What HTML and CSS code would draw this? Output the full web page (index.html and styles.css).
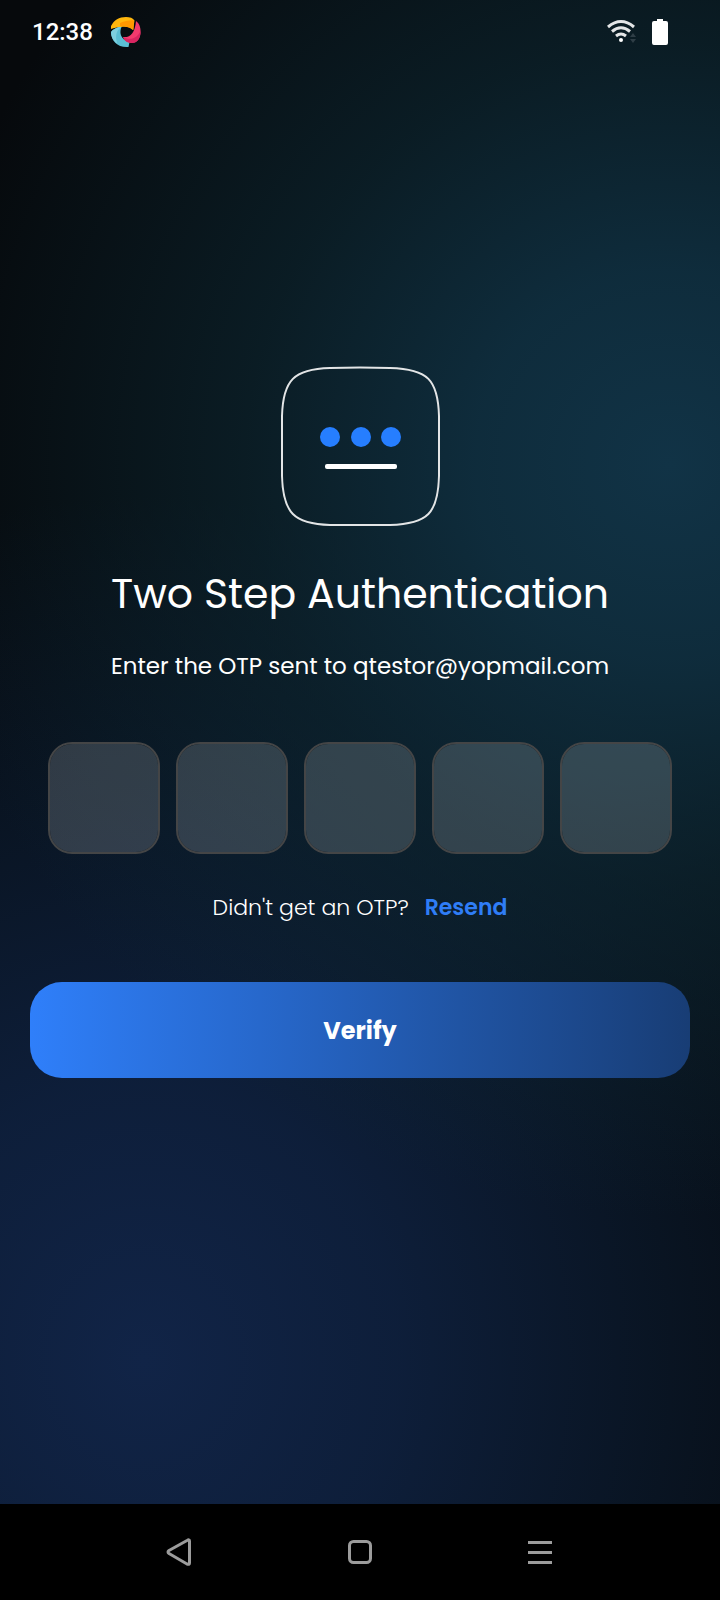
FILE: index.html
```html
<!DOCTYPE html>
<html lang="en">
<head>
<meta charset="utf-8">
<meta name="viewport" content="width=device-width, initial-scale=1">
<title>Two Step Authentication</title>
<link rel="stylesheet" href="styles.css">
</head>
<body>
<div class="screen">
  <header class="status">
    <div class="status-group">
      <time class="clock">12:38</time>
      <svg class="app-icon" width="32" height="32" viewBox="0 0 32 32" aria-hidden="true">
        <path fill="#ffb70d" d="M2 10C5 4 10 1 17 1c4 0 7 1 8.500 3.500L24 14c-3-3-7-4-12-3-4 0-7 1-10 2z"/>
        <path fill="#ff9800" d="M11 7c5-2 10-3 14-2.500L24.500 14C21 11 16 10 11 10z"/>
        <path fill="#5bbfd4" d="M12.500 11c-2 5-1 9 2 12 2 2 4 3 6 3l-1 5C9 32 2 25 2 16c2-3 6-5 10.500-5z"/>
        <path fill="#7ed0df" d="M2 16c2-3 6-5 10.500-5-5 3-7 9-4 17-4-3-6.500-7-6.500-12z"/>
        <path fill="#f23a6d" d="M27 5c4 3 5 8 4.500 13-1 6-4.500 9-8.500 9-5 0-8-3-9-6 7 1 12-4 13-16z"/>
        <path fill="#d92561" d="M31.500 15c-3 7-9.500 10-17.500 6 1 3 4 6 9 6 5 0 8.500-4 8.500-12z"/>
      </svg>
    </div>
    <div class="status-group">
      <svg width="29" height="26" viewBox="0 0 29 26" aria-hidden="true">
        <g fill="none" stroke="#e4e6e7" stroke-width="3">
          <path d="M1 8Q14-3 27 8"/>
          <path d="M5 12.500Q14 5 23 12.500"/>
          <path d="M9 17Q14 13 19 17"/>
        </g>
        <circle cx="14" cy="21" r="2" fill="#fff"/>
        <path fill="#2f3e46" d="M23 18l3-4 3 4zM23 20h6l-3 4z"/>
      </svg>
      <svg width="16" height="26" viewBox="0 0 16 26" aria-hidden="true">
        <path fill="#fff" d="M5 0h6v2h3q2 0 2 2v20q0 2-2 2H2q-2 0-2-2V4q0-2 2-2h3z"/>
      </svg>
    </div>
  </header>

  <main class="content">
    <svg class="emblem" width="160" height="160" viewBox="0 0 160 160" aria-hidden="true">
      <path fill="none" stroke="#e3e5e6" stroke-width="2" d="M50 2Q80 1 110 2C148 3 158 14 159 50V110C158 147 148 158 110 159H50C14 158 3 147 2 110V50C3 14 14 3 50 2z"/>
      <g fill="#267eff"><circle cx="50" cy="71" r="10"/><circle cx="81" cy="71" r="10"/><circle cx="111" cy="71" r="10"/></g>
      <rect x="45" y="98" width="72" height="5" rx="2" fill="#fff"/>
    </svg>
    <h1 class="title">Two Step Authentication</h1>
    <p class="subtitle">Enter the OTP sent to qtestor@yopmail.com</p>
    <form class="form">
      <div class="otp">
        <input class="digit" type="text" inputmode="numeric" maxlength="1" aria-label="Digit 1">
        <input class="digit" type="text" inputmode="numeric" maxlength="1" aria-label="Digit 2">
        <input class="digit" type="text" inputmode="numeric" maxlength="1" aria-label="Digit 3">
        <input class="digit" type="text" inputmode="numeric" maxlength="1" aria-label="Digit 4">
        <input class="digit" type="text" inputmode="numeric" maxlength="1" aria-label="Digit 5">
      </div>
      <p class="resend">Didn't get an OTP? <a class="resend-link" href="#">Resend</a></p>
      <button class="verify" type="submit">Verify</button>
    </form>
  </main>

  <nav class="system-nav" aria-label="System">
    <button class="nav-button" type="button" aria-label="Back">
      <svg width="28" height="28" viewBox="0 0 28 28"><path fill="none" stroke="#9c9c9c" stroke-width="3" stroke-linejoin="round" d="M21 2.500Q23.500 1 23.500 3v22q0 2-2.500 1L3 15.500Q1 14 3 12.500z"/></svg>
    </button>
    <button class="nav-button" type="button" aria-label="Home">
      <svg width="24" height="24" viewBox="0 0 24 24"><rect x="1.500" y="1.500" width="21" height="21" rx="4" fill="none" stroke="#9c9c9c" stroke-width="3"/></svg>
    </button>
    <button class="nav-button" type="button" aria-label="Recent apps">
      <svg width="24" height="24" viewBox="0 0 24 24"><path fill="#9c9c9c" d="M0 1h24v3H0zM0 11h24v3H0zM0 21h24v3H0z"/></svg>
    </button>
  </nav>
</div>
</body>
</html>
```
FILE: styles.css
```css
* { box-sizing: border-box; }

body {
  margin: 0;
  background: #000;
  color: #fff;
  font-family: Poppins, "Noto Sans", sans-serif;
}

.screen {
  display: flex;
  flex-direction: column;
  min-height: 100vh;
  background:
    radial-gradient(ellipse 105% 47% at 93% 29%, #113346 0%, rgba(16, 50, 68, 0.85) 26%, rgba(14, 44, 56, 0.55) 56%, rgba(12, 36, 46, 0) 100%),
    radial-gradient(ellipse 110% 54% at 20% 85%, #112447 0%, rgba(15, 34, 66, 0.85) 32%, rgba(12, 30, 54, 0.55) 65%, rgba(8, 20, 36, 0) 100%),
    #06090c;
}

.status {
  display: flex;
  justify-content: space-between;
  align-items: center;
  height: 64px;
  padding: 0 52px 0 32px;
}

.status-group {
  display: flex;
  align-items: center;
  gap: 16px;
}

.clock {
  font: 500 24px/32px Roboto, sans-serif;
}

.content {
  flex: 1;
  display: flex;
  flex-direction: column;
  align-items: center;
  padding: 302px 30px 48px;
}

.title {
  margin: 38px 0 0;
  font-size: 41px;
  font-weight: 400;
  line-height: 60px;
  text-align: center;
}

.subtitle {
  margin: 26px 0 0;
  font-size: 23px;
  font-weight: 400;
  line-height: 32px;
  text-align: center;
}

.form {
  width: 100%;
  margin-top: 60px;
}

.otp {
  display: grid;
  grid-template-columns: repeat(5, 1fr);
  gap: 16px;
  padding: 0 18px;
}

.digit {
  width: 100%;
  min-width: 0;
  aspect-ratio: 1;
  border: 2px solid #444546;
  border-radius: 24px;
  background: rgba(255, 255, 255, 0.16);
  background-clip: padding-box;
  color: #fff;
  font: inherit;
  font-size: 41px;
  text-align: center;
}

.resend {
  display: flex;
  justify-content: center;
  gap: 16px;
  margin: 38px 0 0;
  font-size: 22px;
  font-weight: 300;
  line-height: 32px;
}

.resend-link {
  color: #2f7df6;
  font-weight: 600;
  text-decoration: none;
}

.verify {
  display: block;
  width: 100%;
  height: 96px;
  margin-top: 58px;
  border: 0;
  border-radius: 32px;
  background: linear-gradient(90deg, #2f7ffa, #183d75);
  color: #fff;
  font: inherit;
  font-size: 24px;
  font-weight: 700;
}

.system-nav {
  display: grid;
  grid-template-columns: repeat(3, 1fr);
  height: 96px;
  padding: 0 90px;
  background: #000;
}

.nav-button {
  display: flex;
  justify-content: center;
  align-items: center;
  padding: 0;
  border: 0;
  background: none;
}
```
